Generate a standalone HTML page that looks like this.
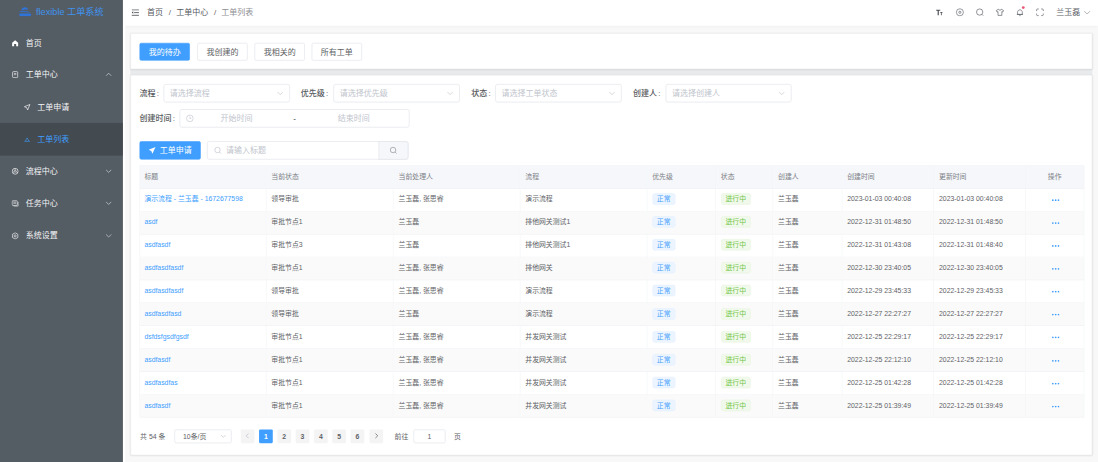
<!DOCTYPE html>
<html lang="zh-CN">
<head>
<meta charset="utf-8">
<title>flexible 工单系统 - 工单列表</title>
<style>
*{box-sizing:border-box;margin:0;padding:0}
html,body{width:1098px;height:462px;overflow:hidden;background:#fff}
body{font-family:"Liberation Sans","Noto Sans CJK SC",sans-serif;font-size:14px;color:#606266;-webkit-font-smoothing:antialiased}
#stage{position:absolute;left:0;top:0;width:1920px;height:808px;transform-origin:0 0;transform:scale(0.571875);background:#f8f8f8;overflow:hidden}
.abs{position:absolute}
/* sidebar */
#side{position:absolute;left:0;top:0;width:215px;height:808px;background:#545c64;color:#fff}
#logo{position:absolute;left:0;top:0;width:215px;height:46px}
#logo svg{position:absolute;left:31px;top:12px}
#logo h1{position:absolute;left:63px;top:0;line-height:43px;font-size:16px;font-weight:400;color:#3f93ee;white-space:nowrap}
.mi{position:absolute;left:0;width:215px;height:56px;line-height:56px;font-size:14px;color:#f4f5f6;white-space:nowrap}
.mi .ic{position:absolute;left:20px;top:22px;width:13px;height:13px}
.mi .tx{position:absolute;left:45px;top:0}
.mi.sub .ic{left:41px}
.mi.sub .tx{left:65px}
.mi.act{background:#434a50;color:#409eff;height:56.5px}
.mi .arr{position:absolute;right:19px;top:22px;width:12px;height:12px}
/* navbar */
#nav{position:absolute;left:215px;top:0;width:1705px;height:44.5px;background:#fff;box-shadow:0 2px 6px rgba(0,0,0,.03)}
#nav .ham{position:absolute;left:15px;top:15.5px}
#nav .bc{position:absolute;top:0;line-height:42px;font-size:14px;white-space:nowrap;color:#55585e}
#nav .bc.sep{color:#606266}
#nav .bc.last{color:#8e9094}
#nav .ri{position:absolute;top:14px;width:15px;height:15px}
#nav .nm{position:absolute;left:1632px;top:0;line-height:42px;font-size:14px;color:#5a5e66;white-space:nowrap}
/* cards */
.card{position:absolute;left:227.8px;width:1682.2px;background:#fff;border:1px solid #ecedef;border-radius:2px;box-shadow:0 1px 3px rgba(0,0,0,.09)}
#c1{top:58px;height:63px}
#c2{top:130.5px;height:665.5px}
.btn{position:absolute;height:32px;line-height:30px;font-weight:400;border:1px solid #dcdfe6;border-radius:3px;background:#fff;color:#606266;font-size:14px;text-align:center;white-space:nowrap}
.btn.pri{background:#409eff;border-color:#409eff;color:#fff}
.lb{position:absolute;height:32px;line-height:32px;font-size:14px;font-weight:500;color:#585b60;white-space:nowrap;margin-left:-1px}
.sel{position:absolute;height:32px;border:1px solid #dcdfe6;border-radius:4px;background:#fff;font-size:14px;line-height:30px;color:#c0c4cc;padding-left:10px;white-space:nowrap}
.sel svg{position:absolute;right:10px;top:9px}
.ph{color:#c0c4cc}
/* table */
#tbl{position:absolute;left:243.5px;top:288.5px;width:1652px;border-collapse:separate;border-spacing:0;table-layout:fixed;font-size:12px;color:#606266;border-top:1px solid #eff1f5;border-left:1px solid #f1f3f6}
#tbl th,#tbl td{height:40.1px;padding:0 0 1.6px 9px;text-align:left;font-weight:400;border-right:1px solid #f1f3f6;border-bottom:1px solid #eef0f4;white-space:nowrap;overflow:hidden;vertical-align:middle;line-height:20px}
#tbl th{height:40px;background:#f5f7fa;color:#7d8086;font-weight:400}
#tbl th:first-child,#tbl td:first-child{padding-left:8px}
#tbl thead th{padding-bottom:0}
#tbl tbody tr:nth-child(even) td{background:#fafafa}
#tbl td.op{text-align:center;padding:0 0 0 4px}
#tbl th.op{text-align:center;padding:0}
.lnk{color:#409eff;text-decoration:none}
.tag{display:inline-block;height:20px;line-height:18px;padding:0 7px;font-size:12px;border-radius:4px;border:1px solid #e2f0ff;background:#ecf5ff;color:#4ba3fc;vertical-align:middle;position:relative;top:-0.6px}
.tag.ok{border-color:#e8f5e0;background:#f0f9eb;color:#72c648}
.more{display:inline-block;vertical-align:middle}
/* pagination */
.pg{position:absolute;top:752px;height:23px;line-height:24px;font-size:12px;color:#606266;white-space:nowrap}
.pb{position:absolute;top:750.8px;width:24px;height:24.4px;line-height:25px;border-radius:2px;background:#f4f4f5;color:#606266;font-size:12px;font-weight:700;text-align:center}
.pb.on{background:#409eff;color:#fff}
.pb svg{position:absolute;left:6px;top:5px}

#gap{position:absolute;left:228px;top:120px;width:1681.5px;height:11.5px;background:#e9eaec}
#strip{position:absolute;left:215px;top:44px;width:4px;height:764px;background:#fff}
.lb b{font-weight:400;margin-left:2px}

</style>
</head>
<body>
<div id="stage">
  <div id="side">
    <div id="logo">
      <svg width="25" height="17" viewBox="0 0 25 17"><path d="M6.500 6.200C6.800 3 9.300.8 12.600.8c3 0 5.300 1.700 6 4.300-2.700-.5-5.200-.5-7.800-.1-1.700.2-3.200.6-4.300 1.200z" fill="#2f74d8"/><path d="M1.500 9.300c2.500-1.600 6-2.300 9.600-2.300 4.300 0 8.500 1.200 11.600 3.600-3.600-1-7.300-1.400-11-1.300-3.600 0-7 .3-10.200 0z" fill="#2f74d8" opacity=".75"/><path d="M3.800 11.800h17.400c1.400 0 2.400 1 2.400 2.200s-1 2.200-2.400 2.200H5.300c-1.600 0-2.800-1-2.800-2.300 0-.8.500-1.600 1.300-2.100z" fill="#2f74d8"/></svg>
      <h1>flexible 工单系统</h1>
    </div>
    <div class="mi" style="top:46.7px">
      <svg class="ic" viewBox="0 0 16 16"><path d="M8 1.500 1.500 7.200V14.500h4.300V10h4.400v4.500h4.300V7.200z" fill="#fff"/></svg>
      <span class="tx">首页</span>
    </div>
    <div class="mi" style="top:102.3px">
      <svg class="ic" viewBox="0 0 16 16"><rect x="2.500" y="1.500" width="11" height="13" rx="2" fill="none" stroke="#fff" stroke-width="1.400"/><path d="M5.500 5.500h5M5.500 8h5" stroke="#fff" stroke-width="1.200"/></svg>
      <span class="tx">工单中心</span>
      <svg class="arr" viewBox="0 0 12 12"><path d="M1.500 8.500 6 4l4.500 4.500" fill="none" stroke="#d4d7da" stroke-width="1.200"/></svg>
    </div>
    <div class="mi sub" style="top:158.5px">
      <svg class="ic" viewBox="0 0 16 16"><path d="M14 2 2 7l5 2 2 5z" fill="none" stroke="#fff" stroke-width="1.400" stroke-linejoin="round"/></svg>
      <span class="tx">工单申请</span>
    </div>
    <div class="mi sub act" style="top:215px">
      <svg class="ic" viewBox="0 0 16 16"><path d="M2 12.500h12M4 12 8 5l4 7" fill="none" stroke="#409eff" stroke-width="1.300"/></svg>
      <span class="tx">工单列表</span>
    </div>
    <div class="mi" style="top:270.5px">
      <svg class="ic" viewBox="0 0 16 16"><circle cx="8" cy="8" r="6.300" fill="none" stroke="#fff" stroke-width="1.400"/><circle cx="8" cy="8" r="2.200" fill="none" stroke="#fff" stroke-width="1.200"/><path d="M8 1.700v4M2.500 11l3.500-2M13.500 11 10 9" stroke="#fff" stroke-width="1.200"/></svg>
      <span class="tx">流程中心</span>
      <svg class="arr" viewBox="0 0 12 12"><path d="M1.500 4 6 8.500 10.500 4" fill="none" stroke="#d4d7da" stroke-width="1.200"/></svg>
    </div>
    <div class="mi" style="top:327px">
      <svg class="ic" viewBox="0 0 16 16"><rect x="1.500" y="2.500" width="11" height="10" rx="1.500" fill="none" stroke="#fff" stroke-width="1.300"/><path d="M4 5.500h6M4 8h6M14.500 5v9h-10" fill="none" stroke="#fff" stroke-width="1.200"/></svg>
      <span class="tx">任务中心</span>
      <svg class="arr" viewBox="0 0 12 12"><path d="M1.500 4 6 8.500 10.500 4" fill="none" stroke="#d4d7da" stroke-width="1.200"/></svg>
    </div>
    <div class="mi" style="top:383.5px">
      <svg class="ic" viewBox="0 0 16 16"><path d="M8 1.200 13.900 4.600v6.800L8 14.800 2.100 11.400V4.600z" fill="none" stroke="#fff" stroke-width="1.400" stroke-linejoin="round"/><circle cx="8" cy="8" r="2.300" fill="none" stroke="#fff" stroke-width="1.300"/></svg>
      <span class="tx">系统设置</span>
      <svg class="arr" viewBox="0 0 12 12"><path d="M1.500 4 6 8.500 10.500 4" fill="none" stroke="#d4d7da" stroke-width="1.200"/></svg>
    </div>
  </div>

  <div id="nav">
    <svg class="ham" width="13" height="12" viewBox="0 0 13 12"><path d="M0 1.200h13M4.500 6h8.500M0 10.800h13" stroke="#44474c" stroke-width="1.400"/><path d="M3 3.800v4.400L0.300 6z" fill="#44474c"/></svg>
    <span class="bc" style="left:42px">首页</span>
    <span class="bc sep" style="left:80px">/</span>
    <span class="bc" style="left:93px">工单中心</span>
    <span class="bc sep" style="left:159px">/</span>
    <span class="bc last" style="left:172px">工单列表</span>

    <svg class="ri" style="left:1420px" viewBox="0 0 18 18"><path d="M2.500 3.500h8.500v2.400H8V15H5.500V5.900H2.500z" fill="#4d5056"/><path d="M10.800 8.500h5v1.700h-1.700V15h-1.700v-4.800h-1.600z" fill="#4d5056"/></svg>
    <svg class="ri" style="left:1455.500px" viewBox="0 0 18 18"><circle cx="9" cy="9" r="7.400" fill="none" stroke="#5a5e66" stroke-width="1.300"/><circle cx="9" cy="9" r="2.300" fill="#fff" stroke="#5a5e66" stroke-width="1.400"/></svg>
    <svg class="ri" style="left:1490.500px" viewBox="0 0 18 18"><circle cx="8.500" cy="8.500" r="6.600" fill="none" stroke="#5a5e66" stroke-width="1.400"/><path d="M13.200 13.200 16 16" stroke="#5a5e66" stroke-width="1.400"/></svg>
    <svg class="ri" style="left:1526px" viewBox="0 0 18 18"><path d="M6 2.500 1.500 5l1.500 3.500 2-1V15.500h8V7.500l2 1L16.500 5 12 2.500c-.5 1.500-1.700 2.200-3 2.200s-2.500-.7-3-2.200z" fill="none" stroke="#5a5e66" stroke-width="1.400" stroke-linejoin="round"/></svg>
    <svg class="ri" style="left:1561px;overflow:visible" viewBox="0 0 18 18"><path d="M4 13.500V9c0-3 2.200-5.200 5-5.200S14 6 14 9v4.500zM2.500 13.500h13M7.500 16h3" fill="none" stroke="#5a5e66" stroke-width="1.400"/><circle cx="16" cy="-0.800" r="3" fill="#ea5a78"/></svg>
    <svg class="ri" style="left:1596px" viewBox="0 0 18 18"><path d="M2 6.500V4a2 2 0 0 1 2-2h2.500M11.500 2H14a2 2 0 0 1 2 2v2.500M16 11.500V14a2 2 0 0 1-2 2h-2.500M6.500 16H4a2 2 0 0 1-2-2v-2.500" fill="none" stroke="#5a5e66" stroke-width="1.400"/></svg>
    <span class="nm">兰玉磊</span>
    <svg class="abs" style="left:1679px;top:15px" width="14" height="14" viewBox="0 0 14 14"><path d="M2 4.500 7 9.500l5-5" fill="none" stroke="#909399" stroke-width="1.200"/></svg>
  </div>

  <div id="strip"></div>
  <div id="gap"></div>
  <div class="card" id="c1"></div>
  <div class="btn pri" style="left:244px;top:74.6px;width:88px;height:31.6px">我的待办</div>
  <div class="btn" style="left:345px;top:74.6px;width:88px;height:31.6px">我创建的</div>
  <div class="btn" style="left:445px;top:74.6px;width:88px;height:31.6px">我相关的</div>
  <div class="btn" style="left:545px;top:74.6px;width:88px;height:31.6px">所有工单</div>

  <div class="card" id="c2"></div>
  <span class="lb" style="left:245px;top:147px">流程<b>:</b></span>
  <div class="sel" style="left:286px;top:147px;width:221px">请选择流程<svg width="12" height="12" viewBox="0 0 12 12"><path d="M1.500 4 6 8.500 10.500 4" fill="none" stroke="#c0c4cc" stroke-width="1.200"/></svg></div>
  <span class="lb" style="left:527px;top:147px">优先级<b>:</b></span>
  <div class="sel" style="left:583px;top:147px;width:221px">请选择优先级<svg width="12" height="12" viewBox="0 0 12 12"><path d="M1.500 4 6 8.500 10.500 4" fill="none" stroke="#c0c4cc" stroke-width="1.200"/></svg></div>
  <span class="lb" style="left:825px;top:147px">状态<b>:</b></span>
  <div class="sel" style="left:866px;top:147px;width:221px">请选择工单状态<svg width="12" height="12" viewBox="0 0 12 12"><path d="M1.500 4 6 8.500 10.500 4" fill="none" stroke="#c0c4cc" stroke-width="1.200"/></svg></div>
  <span class="lb" style="left:1108px;top:147px">创建人<b>:</b></span>
  <div class="sel" style="left:1164px;top:147px;width:220px">请选择创建人<svg width="12" height="12" viewBox="0 0 12 12"><path d="M1.500 4 6 8.500 10.500 4" fill="none" stroke="#c0c4cc" stroke-width="1.200"/></svg></div>

  <span class="lb" style="left:245px;top:191px">创建时间<b>:</b></span>
  <div class="sel" style="left:314px;top:191px;width:402px;padding:0">
    <svg style="left:10px;right:auto;top:8px" width="14" height="14" viewBox="0 0 14 14"><circle cx="7" cy="7" r="5.800" fill="none" stroke="#c0c4cc" stroke-width="1.100"/><path d="M7 3.800V7h2.800" fill="none" stroke="#c0c4cc" stroke-width="1.100"/></svg>
    <span class="abs" style="left:30px;width:137px;text-align:center;top:0">开始时间</span>
    <span class="abs" style="left:190px;width:20px;text-align:center;top:0;color:#303133">-</span>
    <span class="abs" style="left:235px;width:137px;text-align:center;top:0">结束时间</span>
  </div>

  <div class="btn pri" style="left:244px;top:247px;width:107px;padding-left:20px"><svg class="abs" style="left:14px;top:8px" width="14" height="14" viewBox="0 0 14 14"><path d="M13 1 1 6l4.500 2.200L7.500 13z" fill="#fff"/></svg>工单申请</div>
  <div class="sel" style="left:362px;top:247px;width:352px;padding-left:32px">请输入标题
    <svg style="left:11px;right:auto;top:8px" width="14" height="14" viewBox="0 0 14 14"><circle cx="6.300" cy="6.300" r="4.800" fill="none" stroke="#c0c4cc" stroke-width="1.200"/><path d="m9.800 9.800 2.700 2.700" stroke="#c0c4cc" stroke-width="1.200"/></svg>
    <span class="abs" style="right:-1px;top:-1px;width:52px;height:32px;background:#f5f7fa;border:1px solid #dcdfe6;border-radius:0 4px 4px 0"><svg style="left:18px;right:auto;top:8px" width="14" height="14" viewBox="0 0 14 14"><circle cx="6.300" cy="6.300" r="4.800" fill="none" stroke="#909399" stroke-width="1.200"/><path d="m9.800 9.800 2.700 2.700" stroke="#909399" stroke-width="1.200"/></svg></span>
  </div>

  <table id="tbl">
    <colgroup><col style="width:221px"><col style="width:222.5px"><col style="width:221.5px"><col style="width:222px"><col style="width:120px"><col style="width:100px"><col style="width:121px"><col style="width:160.5px"><col style="width:161px"><col style="width:101.5px"></colgroup>
    <thead><tr><th>标题</th><th>当前状态</th><th>当前处理人</th><th>流程</th><th>优先级</th><th>状态</th><th>创建人</th><th>创建时间</th><th>更新时间</th><th class="op">操作</th></tr></thead>
    <tbody>
<tr><td><a class="lnk">演示流程 - 兰玉磊 - 1672677598</a></td><td>领导审批</td><td>兰玉磊, 张思睿</td><td>演示流程</td><td><span class="tag">正常</span></td><td><span class="tag ok">进行中</span></td><td>兰玉磊</td><td>2023-01-03 00:40:08</td><td>2023-01-03 00:40:08</td><td class="op"><svg class="more" width="14" height="4" viewBox="0 0 14 4"><circle cx="2" cy="2" r="1.500" fill="#409eff"/><circle cx="7" cy="2" r="1.500" fill="#409eff"/><circle cx="12" cy="2" r="1.500" fill="#409eff"/></svg></td></tr>
<tr><td><a class="lnk">asdf</a></td><td>审批节点1</td><td>兰玉磊</td><td>排他网关测试1</td><td><span class="tag">正常</span></td><td><span class="tag ok">进行中</span></td><td>兰玉磊</td><td>2022-12-31 01:48:50</td><td>2022-12-31 01:48:50</td><td class="op"><svg class="more" width="14" height="4" viewBox="0 0 14 4"><circle cx="2" cy="2" r="1.500" fill="#409eff"/><circle cx="7" cy="2" r="1.500" fill="#409eff"/><circle cx="12" cy="2" r="1.500" fill="#409eff"/></svg></td></tr>
<tr><td><a class="lnk">asdfasdf</a></td><td>审批节点3</td><td>兰玉磊</td><td>排他网关测试1</td><td><span class="tag">正常</span></td><td><span class="tag ok">进行中</span></td><td>兰玉磊</td><td>2022-12-31 01:43:08</td><td>2022-12-31 01:48:40</td><td class="op"><svg class="more" width="14" height="4" viewBox="0 0 14 4"><circle cx="2" cy="2" r="1.500" fill="#409eff"/><circle cx="7" cy="2" r="1.500" fill="#409eff"/><circle cx="12" cy="2" r="1.500" fill="#409eff"/></svg></td></tr>
<tr><td><a class="lnk">asdfasdfasdf</a></td><td>审批节点1</td><td>兰玉磊, 张思睿</td><td>排他网关</td><td><span class="tag">正常</span></td><td><span class="tag ok">进行中</span></td><td>兰玉磊</td><td>2022-12-30 23:40:05</td><td>2022-12-30 23:40:05</td><td class="op"><svg class="more" width="14" height="4" viewBox="0 0 14 4"><circle cx="2" cy="2" r="1.500" fill="#409eff"/><circle cx="7" cy="2" r="1.500" fill="#409eff"/><circle cx="12" cy="2" r="1.500" fill="#409eff"/></svg></td></tr>
<tr><td><a class="lnk">asdfasdfasdf</a></td><td>领导审批</td><td>兰玉磊, 张思睿</td><td>演示流程</td><td><span class="tag">正常</span></td><td><span class="tag ok">进行中</span></td><td>兰玉磊</td><td>2022-12-29 23:45:33</td><td>2022-12-29 23:45:33</td><td class="op"><svg class="more" width="14" height="4" viewBox="0 0 14 4"><circle cx="2" cy="2" r="1.500" fill="#409eff"/><circle cx="7" cy="2" r="1.500" fill="#409eff"/><circle cx="12" cy="2" r="1.500" fill="#409eff"/></svg></td></tr>
<tr><td><a class="lnk">asdfasdfasd</a></td><td>领导审批</td><td>兰玉磊</td><td>演示流程</td><td><span class="tag">正常</span></td><td><span class="tag ok">进行中</span></td><td>兰玉磊</td><td>2022-12-27 22:27:27</td><td>2022-12-27 22:27:27</td><td class="op"><svg class="more" width="14" height="4" viewBox="0 0 14 4"><circle cx="2" cy="2" r="1.500" fill="#409eff"/><circle cx="7" cy="2" r="1.500" fill="#409eff"/><circle cx="12" cy="2" r="1.500" fill="#409eff"/></svg></td></tr>
<tr><td><a class="lnk">dsfdsfgsdfgsdf</a></td><td>审批节点1</td><td>兰玉磊, 张思睿</td><td>并发网关测试</td><td><span class="tag">正常</span></td><td><span class="tag ok">进行中</span></td><td>兰玉磊</td><td>2022-12-25 22:29:17</td><td>2022-12-25 22:29:17</td><td class="op"><svg class="more" width="14" height="4" viewBox="0 0 14 4"><circle cx="2" cy="2" r="1.500" fill="#409eff"/><circle cx="7" cy="2" r="1.500" fill="#409eff"/><circle cx="12" cy="2" r="1.500" fill="#409eff"/></svg></td></tr>
<tr><td><a class="lnk">asdfasdf</a></td><td>审批节点1</td><td>兰玉磊, 张思睿</td><td>并发网关测试</td><td><span class="tag">正常</span></td><td><span class="tag ok">进行中</span></td><td>兰玉磊</td><td>2022-12-25 22:12:10</td><td>2022-12-25 22:12:10</td><td class="op"><svg class="more" width="14" height="4" viewBox="0 0 14 4"><circle cx="2" cy="2" r="1.500" fill="#409eff"/><circle cx="7" cy="2" r="1.500" fill="#409eff"/><circle cx="12" cy="2" r="1.500" fill="#409eff"/></svg></td></tr>
<tr><td><a class="lnk">asdfasdfas</a></td><td>审批节点1</td><td>兰玉磊, 张思睿</td><td>并发网关测试</td><td><span class="tag">正常</span></td><td><span class="tag ok">进行中</span></td><td>兰玉磊</td><td>2022-12-25 01:42:28</td><td>2022-12-25 01:42:28</td><td class="op"><svg class="more" width="14" height="4" viewBox="0 0 14 4"><circle cx="2" cy="2" r="1.500" fill="#409eff"/><circle cx="7" cy="2" r="1.500" fill="#409eff"/><circle cx="12" cy="2" r="1.500" fill="#409eff"/></svg></td></tr>
<tr><td><a class="lnk">asdfasdf</a></td><td>审批节点1</td><td>兰玉磊, 张思睿</td><td>并发网关测试</td><td><span class="tag">正常</span></td><td><span class="tag ok">进行中</span></td><td>兰玉磊</td><td>2022-12-25 01:39:49</td><td>2022-12-25 01:39:49</td><td class="op"><svg class="more" width="14" height="4" viewBox="0 0 14 4"><circle cx="2" cy="2" r="1.500" fill="#409eff"/><circle cx="7" cy="2" r="1.500" fill="#409eff"/><circle cx="12" cy="2" r="1.500" fill="#409eff"/></svg></td></tr>
    </tbody>
  </table>

  <span class="pg" style="left:245px">共 54 条</span>
  <div class="sel" style="left:305px;top:751px;width:100px;height:24px;line-height:23px;font-size:12px;color:#606266;padding-left:14px;border-radius:3px">10条/页<svg style="top:5px;right:8px" width="11" height="11" viewBox="0 0 12 12"><path d="M1.500 4 6 8.500 10.500 4" fill="none" stroke="#c0c4cc" stroke-width="1.200"/></svg></div>
  <div class="pb" style="left:421px"><svg width="12" height="12" viewBox="0 0 12 12"><path d="M7.500 2 3.500 6l4 4" fill="none" stroke="#c0c4cc" stroke-width="1.300"/></svg></div>
  <div class="pb on" style="left:453px">1</div>
  <div class="pb" style="left:485px">2</div>
  <div class="pb" style="left:517px">3</div>
  <div class="pb" style="left:549px">4</div>
  <div class="pb" style="left:581px">5</div>
  <div class="pb" style="left:613px">6</div>
  <div class="pb" style="left:646px"><svg width="12" height="12" viewBox="0 0 12 12"><path d="M4.500 2l4 4-4 4" fill="none" stroke="#606266" stroke-width="1.300"/></svg></div>
  <span class="pg" style="left:690px">前往</span>
  <div class="sel" style="left:723px;top:751px;width:56px;height:24px;line-height:23px;font-size:12px;color:#606266;padding:0;text-align:center;border-radius:3px">1</div>
  <span class="pg" style="left:794px">页</span>
</div>

</body>
</html>
